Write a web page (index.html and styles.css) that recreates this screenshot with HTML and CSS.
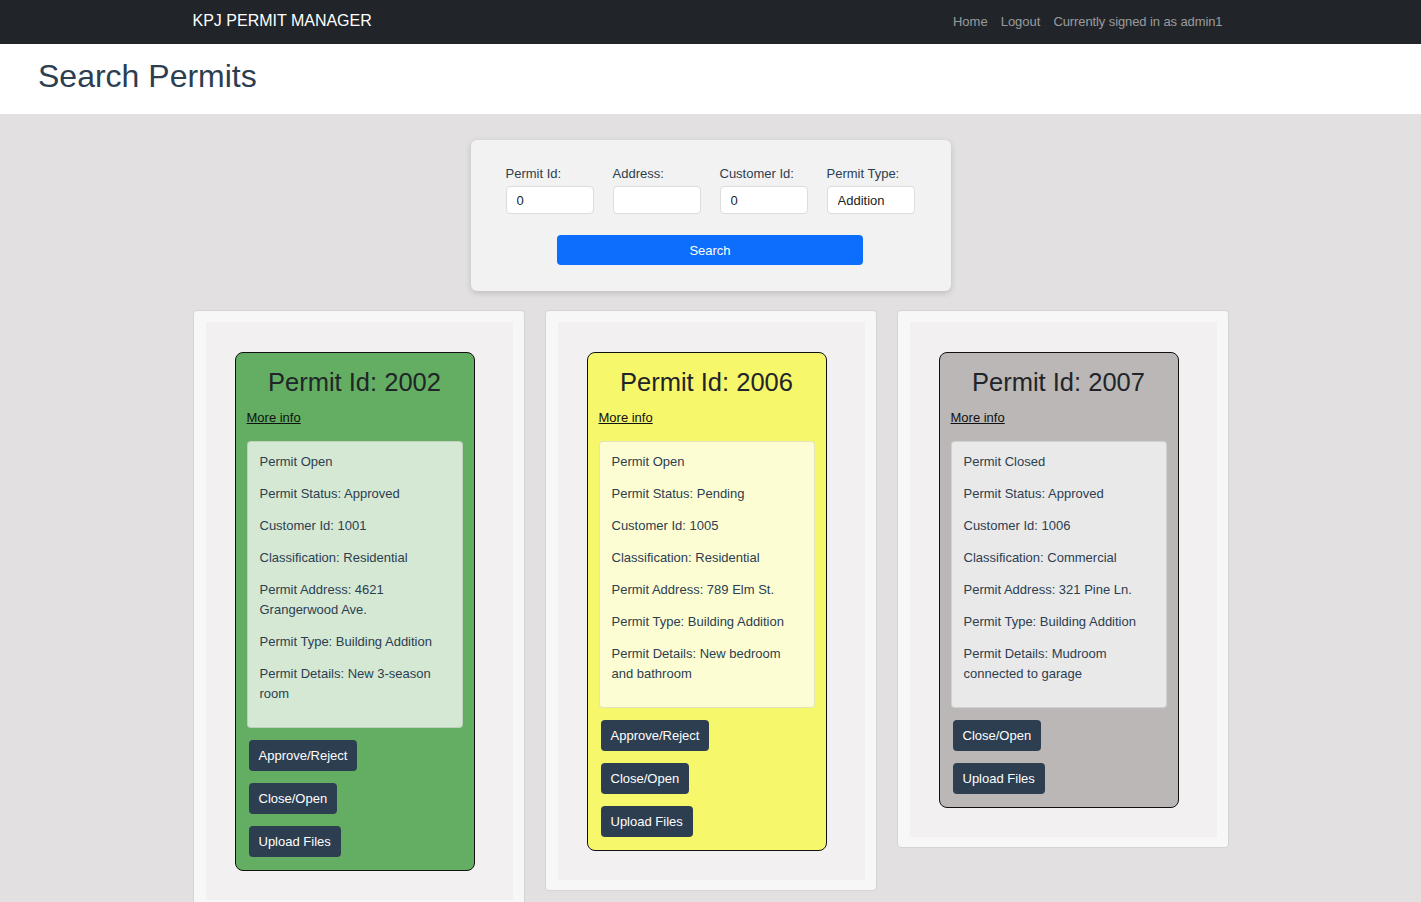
FILE: index.html
```html
<!DOCTYPE html>
<html lang="en">
<head>
<meta charset="utf-8">
<title>Search Permits</title>
<link rel="stylesheet" href="styles.css">
</head>
<body>
<nav class="navbar">
  <div class="nav-inner">
    <a class="brand" href="#">KPJ PERMIT MANAGER</a>
    <div class="nav-links">
      <a href="#">Home</a>
      <a href="#">Logout</a>
      <span>Currently signed in as admin1</span>
    </div>
  </div>
</nav>
<header class="page-header">
  <h1>Search Permits</h1>
</header>
<main class="content">
  <form class="search-card">
    <div class="fields">
      <label class="field"><span>Permit Id:</span><input type="text" value="0"></label>
      <label class="field"><span>Address:</span><input type="text" value=""></label>
      <label class="field"><span>Customer Id:</span><input type="text" value="0"></label>
      <label class="field"><span>Permit Type:</span><input type="text" value="Addition"></label>
    </div>
    <button type="button" class="search-btn">Search</button>
  </form>

  <div class="cards">
    <div class="outer">
      <div class="panel">
        <div class="permit green">
          <h2>Permit Id: 2002</h2>
          <a class="more" href="#">More info</a>
          <div class="details">
            <p>Permit Open</p>
            <p>Permit Status: Approved</p>
            <p>Customer Id: 1001</p>
            <p>Classification: Residential</p>
            <p>Permit Address: 4621 Grangerwood Ave.</p>
            <p>Permit Type: Building Addition</p>
            <p>Permit Details: New 3-season room</p>
          </div>
          <div class="actions">
            <button type="button">Approve/Reject</button>
            <button type="button">Close/Open</button>
            <button type="button">Upload Files</button>
          </div>
        </div>
      </div>
    </div>

    <div class="outer">
      <div class="panel">
        <div class="permit yellow">
          <h2>Permit Id: 2006</h2>
          <a class="more" href="#">More info</a>
          <div class="details">
            <p>Permit Open</p>
            <p>Permit Status: Pending</p>
            <p>Customer Id: 1005</p>
            <p>Classification: Residential</p>
            <p>Permit Address: 789 Elm St.</p>
            <p>Permit Type: Building Addition</p>
            <p>Permit Details: New bedroom and bathroom</p>
          </div>
          <div class="actions">
            <button type="button">Approve/Reject</button>
            <button type="button">Close/Open</button>
            <button type="button">Upload Files</button>
          </div>
        </div>
      </div>
    </div>

    <div class="outer">
      <div class="panel">
        <div class="permit grey">
          <h2>Permit Id: 2007</h2>
          <a class="more" href="#">More info</a>
          <div class="details">
            <p>Permit Closed</p>
            <p>Permit Status: Approved</p>
            <p>Customer Id: 1006</p>
            <p>Classification: Commercial</p>
            <p>Permit Address: 321 Pine Ln.</p>
            <p>Permit Type: Building Addition</p>
            <p>Permit Details: Mudroom connected to garage</p>
          </div>
          <div class="actions">
            <button type="button">Close/Open</button>
            <button type="button">Upload Files</button>
          </div>
        </div>
      </div>
    </div>
  </div>
</main>
</body>
</html>
```

FILE: styles.css
```css
* { box-sizing: border-box; }

html, body {
  margin: 0;
  padding: 0;
}

body {
  font-family: "Liberation Sans", Arial, sans-serif;
  background: #e2e0e1;
  color: #2c3e50;
}

.navbar {
  background: #212529;
  height: 44px;
}

.nav-inner {
  max-width: 1060px;
  margin: 0 auto;
  padding: 0 12px;
  height: 44px;
  display: flex;
  align-items: center;
  justify-content: space-between;
}

.brand {
  color: #fff;
  text-decoration: none;
  font-size: 16px;
  line-height: 20px;
  margin-top: -3px;
}

.nav-links {
  display: flex;
  gap: 13px;
  padding-right: 6px;
  font-size: 13px;
  line-height: 18px;
  margin-top: -1px;
}

.nav-links a,
.nav-links span {
  color: rgba(255, 255, 255, 0.55);
  text-decoration: none;
}

.nav-links span {
  letter-spacing: -0.1px;
}

.page-header {
  background: #fff;
  height: 70px;
  display: flex;
  align-items: center;
  padding-left: 38px;
}

.page-header h1 {
  margin: 0;
  font-weight: normal;
  font-size: 32px;
  line-height: 36px;
  color: #2c3e50;
  margin-top: -6px;
}

.content {
  display: flex;
  flex-direction: column;
  align-items: center;
  padding-top: 26px;
}

.search-card {
  width: 480px;
  background: #f2f2f2;
  border-radius: 6px;
  box-shadow: 0 2px 6px rgba(0, 0, 0, 0.16);
  padding: 26px 36px 26px 35px;
  display: flex;
  flex-direction: column;
  align-items: center;
}

.fields {
  display: flex;
  gap: 19px;
  width: 100%;
}

.field {
  width: 88px;
  display: flex;
  flex-direction: column;
  font-size: 13px;
  line-height: 16px;
  color: #2c3e50;
}

.field span {
  margin-bottom: 4px;
}

.field input {
  width: 88px;
  height: 28px;
  border: 1px solid #dcdcdc;
  border-radius: 4px;
  background: #fff;
  padding: 0 10px;
  font-family: inherit;
  font-size: 13px;
  color: #222;
}

.search-btn {
  margin-top: 21px;
  width: 75%;
  height: 30px;
  border: none;
  border-radius: 4px;
  background: #0d6efd;
  color: #fff;
  font-family: inherit;
  font-size: 13px;
}

.cards {
  margin-top: 19px;
  display: flex;
  gap: 20px;
  align-items: flex-start;
}

.outer {
  width: 332px;
  background: #f7f7f7;
  border: 1px solid #d4d4d4;
  border-radius: 4px;
  padding: 11px 11px 10px 12px;
}

.panel {
  background: #f2f0f1;
  padding: 30px 29px 29px 29px;
}

.permit {
  width: 240px;
  border: 1px solid #111;
  border-radius: 8px;
  padding: 14px 11px 13px 11px;
  color: #222;
}

.permit.green { background: #63ae62; }
.permit.yellow { background: #f7f76c; }
.permit.grey { background: #bbb7b6; }

.permit h2 {
  margin: 0;
  font-weight: normal;
  font-size: 25.5px;
  line-height: 31px;
  text-align: center;
  color: #212529;
}

.more {
  display: inline-block;
  margin-top: 10px;
  font-size: 13px;
  line-height: 20px;
  color: #111;
  text-decoration: underline;
}

.details {
  margin-top: 13px;
  border: 1px solid rgba(0, 0, 0, 0.1);
  border-radius: 4px;
  padding: 10px 12px 11px 12px;
  font-size: 13px;
  line-height: 20px;
  color: #2c3e50;
}

.green .details { background: #d5e8d4; }
.yellow .details { background: #fdfdd4; }
.grey .details { background: #e9e9e9; }

.details p {
  margin: 0 0 12px 0;
}

.actions {
  margin-top: 12px;
  padding-left: 2px;
  display: flex;
  flex-direction: column;
  align-items: flex-start;
  gap: 12px;
}

.actions button {
  height: 31px;
  border: none;
  border-radius: 4px;
  background: #2c3e50;
  color: #fff;
  font-family: inherit;
  font-size: 13px;
  padding: 0 10px;
}
```
